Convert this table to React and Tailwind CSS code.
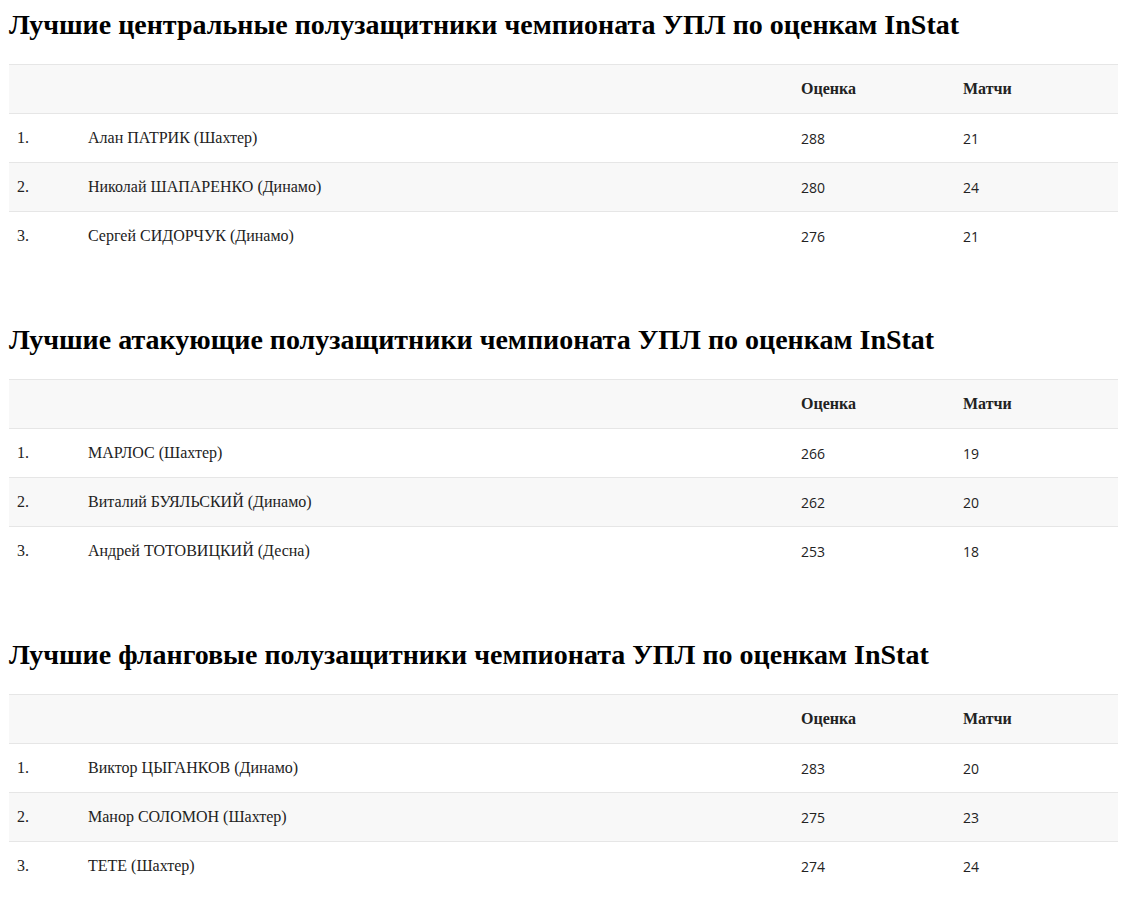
import React from 'react';

const sections = [
  {
    title: 'Лучшие центральные полузащитники чемпионата УПЛ по оценкам InStat',
    rows: [
      ['Алан ПАТРИК (Шахтер)', '288', '21'],
      ['Николай ШАПАРЕНКО (Динамо)', '280', '24'],
      ['Сергей СИДОРЧУК (Динамо)', '276', '21'],
    ],
  },
  {
    title: 'Лучшие атакующие полузащитники чемпионата УПЛ по оценкам InStat',
    rows: [
      ['МАРЛОС (Шахтер)', '266', '19'],
      ['Виталий БУЯЛЬСКИЙ (Динамо)', '262', '20'],
      ['Андрей ТОТОВИЦКИЙ (Десна)', '253', '18'],
    ],
  },
  {
    title: 'Лучшие фланговые полузащитники чемпионата УПЛ по оценкам InStat',
    rows: [
      ['Виктор ЦЫГАНКОВ (Динамо)', '283', '20'],
      ['Манор СОЛОМОН (Шахтер)', '275', '23'],
      ['ТЕТЕ (Шахтер)', '274', '24'],
    ],
  },
];

const serif = "font-['Liberation_Serif',serif]";
const sans = "font-['Open_Sans',sans-serif] text-[14px]";

function Row({ cells, striped, header }) {
  return (
    <div
      className={`grid grid-cols-[71px_713px_162px_1fr] h-[49px] items-center border-t border-[#e6e6e6] ${
        striped ? 'bg-[#f8f8f8]' : 'bg-white'
      }`}
    >
      {cells.map((c, i) => (
        <div
          key={i}
          className={`pl-2 text-[#222] ${
            header ? `font-bold ${serif} text-[16px] text-[#111]` : i < 2 ? `${serif} text-[16px]` : sans
          }`}
        >
          {c}
        </div>
      ))}
    </div>
  );
}

export default function App() {
  return (
    <div className={`bg-white min-h-[907px] px-[9px] pt-[10px] ${serif}`}>
      {sections.map((s, si) => (
        <section key={si} className={si > 0 ? 'mt-[65px]' : ''}>
          <h2 className="text-[28px] leading-[30px] font-bold text-black mb-6">{s.title}</h2>
          <div>
            <Row cells={['', '', 'Оценка', 'Матчи']} striped header />
            {s.rows.map((r, ri) => (
              <Row key={ri} cells={[`${ri + 1}.`, ...r]} striped={ri === 1} />
            ))}
          </div>
        </section>
      ))}
    </div>
  );
}
